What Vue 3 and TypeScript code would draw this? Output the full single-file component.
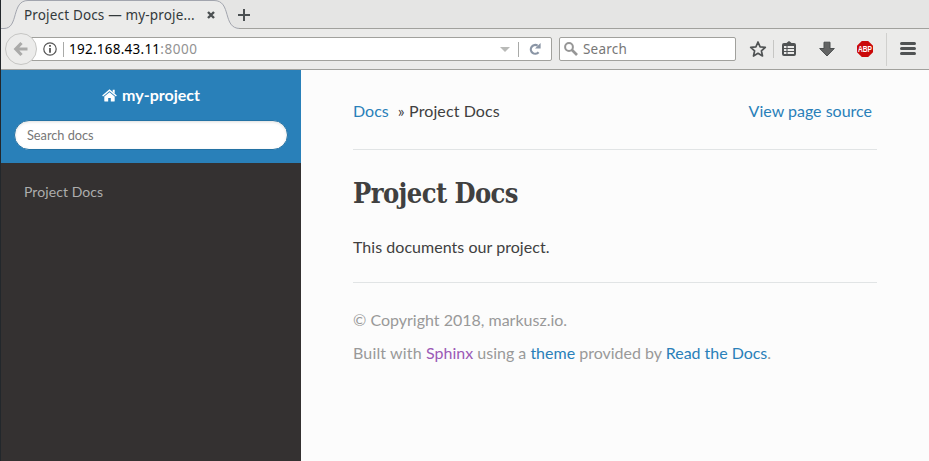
<script setup lang="ts">
import { ref } from 'vue'

const tabTitle = 'Project Docs — my-proje...'
const host = '192.168.43.11'
const port = ':8000'
const query = ref('')
const navItems: string[] = ['Project Docs']
</script>

<template>
  <div class="window">
    <header class="tabs">
      <svg class="tab-shape" width="928" height="29" viewBox="0 0 928 29">
        <path d="M0 28.5H4C18 28.5 10 .5 27 .5H213C231 .5 221 28.5 239 28.5H928V29H0Z" fill="#ebebea" />
        <path d="M0 28.5H3C18 28.5 10 .5 27 .5H213C231 .5 221 28.5 239 28.5" fill="none" stroke="#a2a5ae" />
        <path d="M238 28.5H928" stroke="#a1a19d" />
      </svg>
      <span class="tab-title">{{ tabTitle }}</span>
      <svg class="tab-close" width="8" height="8" viewBox="0 0 8 8"><path d="M1 1l6 6M7 1L1 7" stroke="#4b5052" stroke-width="2.4" /></svg>
      <svg class="tab-new" width="12" height="12" viewBox="0 0 12 12"><path d="M6 0v12M0 6h12" stroke="#4b5052" stroke-width="2" /></svg>
    </header>

    <div class="toolbar">
      <div class="back">
        <svg width="16" height="16" viewBox="0 0 16 16"><path d="M8.5 2L2.8 8l5.7 6M3.5 8H14.5" fill="none" stroke="#aaaaa9" stroke-width="3.2" /></svg>
      </div>
      <div class="urlbar">
        <svg class="info" width="14" height="14" viewBox="0 0 14 14"><circle cx="7" cy="7" r="6.2" fill="none" stroke="#555" stroke-width="1.2" /><path d="M7 6v4.8M7 3v1.8" stroke="#555" stroke-width="1.8" /></svg>
        <i class="bar"></i>
        <span class="url"><b>{{ host }}</b>{{ port }}</span>
        <svg class="drop" width="10" height="5" viewBox="0 0 10 5"><path d="M0 0h10L5 5z" fill="#b9bab8" /></svg>
        <i class="bar reload-bar"></i>
        <svg class="reload" width="12" height="12" viewBox="0 0 12 12"><path d="M9.6 9.2A4.4 4.4 0 1 1 8.6 2.6" fill="none" stroke="#8a95a5" stroke-width="2.2" /><path d="M11.6 0v5.6H6z" fill="#8a95a5" /></svg>
      </div>
      <div class="find">
        <svg width="14" height="14" viewBox="0 0 14 14"><circle cx="5" cy="5" r="3.9" fill="none" stroke="#969696" stroke-width="2" /><path d="M8 8l5 5" stroke="#969696" stroke-width="2.6" /></svg>
        <span>Search</span>
      </div>
      <svg class="actions" width="193" height="40" viewBox="736 29 193 40">
        <path d="M758 42l2.1 4.8 5.2.5-3.9 3.5 1.1 5.2-4.5-2.7-4.5 2.7 1.1-5.2-3.9-3.5 5.2-.5z" fill="none" stroke="#505354" stroke-width="1.7" stroke-linejoin="round" />
        <path d="M773.5 40v18" stroke="#c6c6c4" />
        <path d="M784 43h2.5l2-1.8h1l2 1.8h2.5a2 2 0 0 1 2 2v9a2 2 0 0 1-2 2h-10a2 2 0 0 1-2-2v-9a2 2 0 0 1 2-2z" fill="#505354" />
        <path d="M784 46h10v8h-10z" fill="#ebebea" />
        <path d="M784 48.5h10M784 51.5h10M787 46v8" stroke="#505354" stroke-width="1.1" />
        <path d="M824 42.2h6v6.3h4.3L827 56l-7.3-7.5h4.3z" fill="#636464" stroke="#4b4e4f" />
        <path d="M861.8 41h6.4l4.8 4.8v6.4l-4.8 4.8h-6.4l-4.8-4.8v-6.4z" fill="#ca0909" />
        <text x="865" y="52" textLength="14" lengthAdjust="spacingAndGlyphs" class="abp">ABP</text>
        <path d="M886.5 33v33" stroke="#d0d0ce" />
        <path d="M901.5 43.5h13M901.5 48.5h13M901.5 53.5h13" stroke="#505354" stroke-width="3" stroke-linecap="round" />
      </svg>
    </div>

    <div class="page">
      <aside>
        <div class="brand">
          <a class="home">
            <svg width="15" height="13" viewBox="0 0 15 13"><path d="M7.5 3.2l5.2 4.3v4.3a.8.8 0 0 1-.8.8H8.8V9H6.2v3.6H3.1a.8.8 0 0 1-.8-.8V7.5z" /><path d="M.6 6.9L7.5 1.2l6.9 5.7" fill="none" stroke="#fff" stroke-width="1.35" /><path d="M10.7.8h2v4l-2-1.7z" /></svg>
            <span>my-project</span>
          </a>
          <input v-model="query" type="text" placeholder="Search docs" />
        </div>
        <nav><a v-for="item in navItems" :key="item">{{ item }}</a></nav>
      </aside>
      <main>
        <div class="crumbs">
          <span><a>Docs</a><span class="sep">»</span><span class="current">Project Docs</span></span>
          <a class="source">View page source</a>
        </div>
        <h1>Project Docs</h1>
        <p class="intro">This documents our project.</p>
        <footer>
          <p>© Copyright 2018, markusz.io.</p>
          <p><span class="built">Built with </span><a class="visited">Sphinx</a> using a <a>theme</a> provided by <a class="rtd">Read the Docs</a>.</p>
        </footer>
      </main>
    </div>
  </div>
</template>

<style>
body { margin: 0; overflow: hidden; }
</style>

<style scoped>
* { box-sizing: border-box; }
svg { display: block; flex: none; }
.window { width: 929px; height: 461px; border-left: 1px solid #22272b; background: #fcfcfc; display: flex; flex-direction: column; }
.tabs { position: relative; height: 29px; flex: none; display: flex; align-items: center; background: #e5e5e4; font-family: "Noto Sans", sans-serif; }
.tab-shape { position: absolute; left: 0; top: 0; }
.tab-title { position: relative; width: 182px; padding-left: 23px; font-size: 13.5px; line-height: 20px; letter-spacing: .16px; color: #33393b; white-space: nowrap; margin-top: 1px; }
.tab-close { position: relative; margin-left: 24px; margin-top: 1px; }
.tab-new { position: relative; margin-left: 23px; margin-top: 1px; }
.toolbar { height: 41px; flex: none; display: flex; align-items: flex-start; background: #ebebea; border-bottom: 1px solid #a1a19d; font-family: "Noto Sans", sans-serif; font-size: 13.5px; }
.back { position: relative; z-index: 1; width: 32px; height: 32px; margin: 4px 0 0 4px; border: 1px solid #c6c6c4; border-radius: 50%; background: #ececeb; display: flex; align-items: center; justify-content: center; }
.urlbar { height: 24px; width: 523px; margin: 8px 0 0 -8px; padding-left: 13px; border: 1px solid #a1a19d; border-radius: 0 2px 2px 0; background: #fff; display: flex; align-items: center; }
.bar { width: 1px; height: 15px; background: #a9aaa8; margin-left: 6px; }
.url { width: 431px; margin-left: 5px; color: #929292; white-space: nowrap; letter-spacing: .55px; }
.url b { font-weight: 400; color: #000; letter-spacing: .25px; }
.reload-bar { margin-left: 8px; }
.reload { margin-left: 10px; }
.find { height: 24px; width: 177px; margin: 8px 0 0 7px; padding-left: 4px; border: 1px solid #a1a19d; border-radius: 2px; background: #fff; display: flex; align-items: center; gap: 5px; color: #777; letter-spacing: .2px; }
.abp { font: bold 8.5px "Liberation Sans", sans-serif; fill: #fff; text-anchor: middle; }
.page { flex: 1; display: flex; font-family: Lato, sans-serif; color: #404040; font-size: 16px; line-height: 24px; }
aside { width: 300px; background: #343131; }
.brand { height: 93px; background: #2980b9; padding: 13px 13px 0; display: flex; flex-direction: column; align-items: center; }
.home { display: flex; align-items: center; gap: 5px; color: #fff; font-weight: 700; line-height: 24px; }
.home svg { fill: #fff; }
.brand input { width: 274px; height: 30px; margin-top: 13px; padding: 0 12px; border: 1px solid #2472a4; border-radius: 50px; background: #fff; box-shadow: inset 0 1px 3px #ddd; font: 12.8px Lato, sans-serif; letter-spacing: -.04px; outline: none; }
.brand input::placeholder { color: #777; }
nav { padding: 17px 23px; font-size: 14px; letter-spacing: .08px; }
nav a { display: block; color: #adadad; }
main { width: 576px; padding: 29px 0 0 52px; }
main a { color: #2980b9; }
.crumbs { height: 51px; border-bottom: 1px solid #e1e4e5; display: flex; justify-content: space-between; padding-right: 5px; }
.sep { margin: 0 4.5px 0 9px; }
.current { letter-spacing: .1px; }
h1 { margin: 26px 0 0; font: 700 27px/36px "Roboto Slab", "DejaVu Serif Condensed", "DejaVu Serif", serif; font-stretch: condensed; letter-spacing: -.57px; }
.intro { margin: 23px 0 0; height: 48px; border-bottom: 1px solid #e1e4e5; letter-spacing: .04px; }
footer { padding-top: 25px; color: #999; }
footer p { margin: 0 0 9px; }
.built { letter-spacing: .15px; }
.rtd { letter-spacing: -.03px; }
main .visited { color: #9b59b6; }
</style>
